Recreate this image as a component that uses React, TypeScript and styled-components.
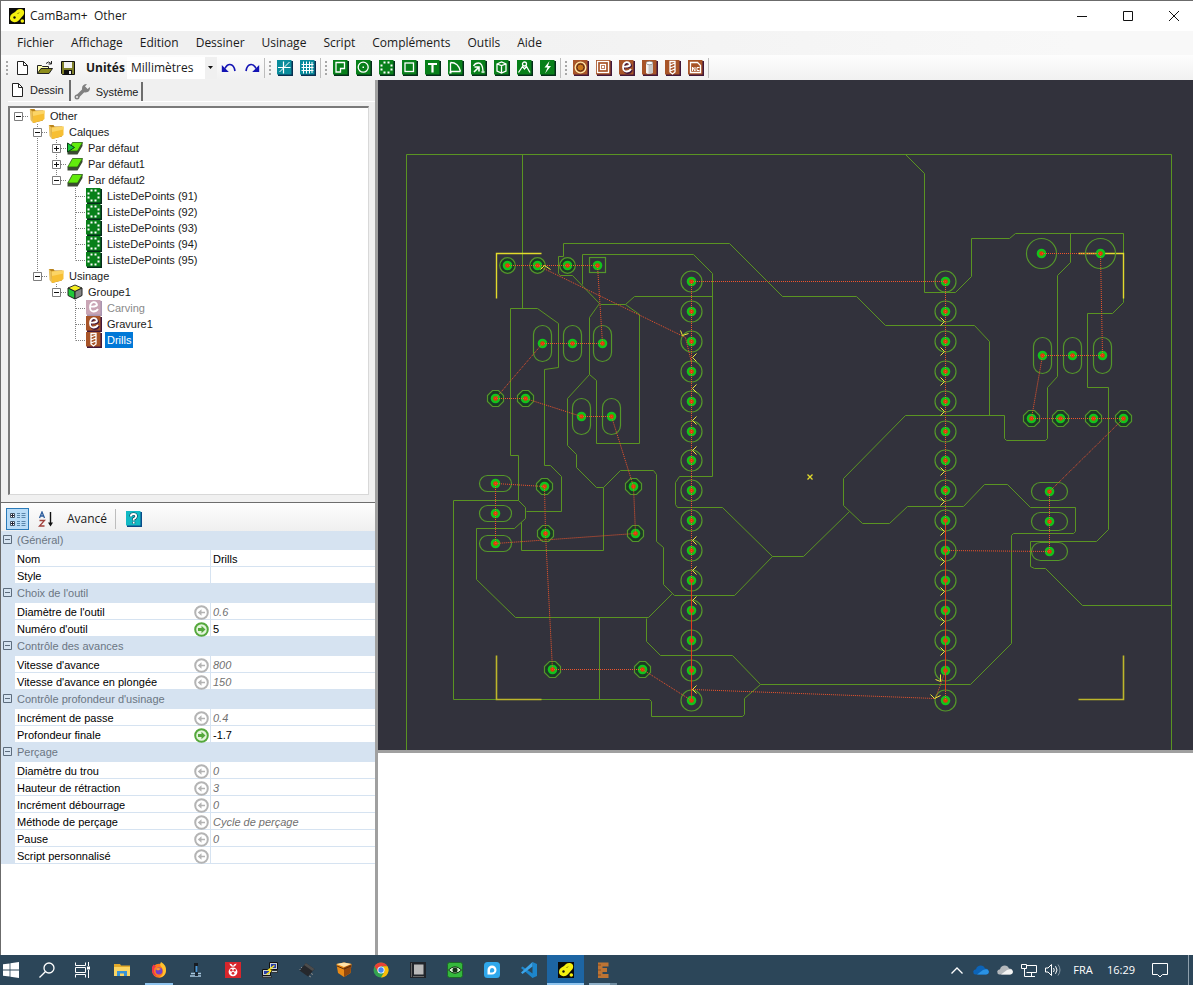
import React from 'react';
import styled, { createGlobalStyle, css } from 'styled-components';

const GlobalStyle = createGlobalStyle`
  * { box-sizing: border-box; }
  html, body { margin: 0; padding: 0; }
  body { background: #f0f0f0; }
  button { font: inherit; color: inherit; border: 0; padding: 0; margin: 0; background: none; cursor: default; }
  svg { display: block; flex: none; }
`;

const uiFont = `'Open Sans', 'Noto Sans', sans-serif`;
const gridFont = `'Liberation Sans', Arial, sans-serif`;

/* ---------- window frame ---------- */

const Desktop = styled.div`
  height: 100vh;
  min-height: 900px;
  display: flex;
  flex-direction: column;
  font: 12px/16px ${uiFont};
  color: #1a1a1a;
`;

const AppWindow = styled.div`
  flex: 1;
  min-height: 0;
  display: flex;
  flex-direction: column;
  border-left: 1px solid #6b6b6b;
  border-top: 1px solid #6b6b6b;
  background: #f0f0f0;
`;

const TitleBar = styled.header`
  display: flex;
  align-items: center;
  height: 30px;
  padding-left: 8px;
  background: #fff;
`;

const Title = styled.h1`
  flex: 1;
  margin: 0 0 0 5px;
  font: inherit;
  white-space: pre;
`;

const CaptionButton = styled.button<{ $edge?: boolean }>`
  display: flex;
  align-items: center;
  justify-content: center;
  width: ${p => (p.$edge ? 42 : 46)}px;
  padding-left: ${p => (p.$edge ? 4 : 0)}px;
  height: 30px;
`;

const MenuBar = styled.nav`
  display: flex;
  align-items: center;
  gap: 1px;
  height: 24px;
  padding-left: 8px;
  background: linear-gradient(90deg, #f0f0f0 30%, #f8f8f8 90%);
`;

const MenuItem = styled.button`
  padding: 0 8px;
  height: 20px;
`;

const ToolBar = styled.div`
  display: flex;
  align-items: center;
  height: 25px;
  padding-left: 4px;
  background: linear-gradient(180deg, #fdfdfd, #f1f1f1);
`;

const ToolButton = styled.button`
  display: flex;
  align-items: center;
  justify-content: center;
  width: 23px;
  height: 22px;
`;

const Grip = styled.span`
  width: 5px;
  height: 15px;
  background: radial-gradient(circle, #a8a8a8 1px, transparent 1px) 0 0 / 4px 4px repeat-y;
`;

const Divider = styled.span<{ $gap?: number }>`
  width: 1px;
  height: 20px;
  margin: 0 3px 0 ${p => p.$gap ?? 1}px;
  background: #bdbdbd;
`;

const UnitsLabel = styled.label`
  width: 41px;
  margin-left: 7px;
  font-weight: 700;
`;

const UnitsBox = styled.div`
  display: grid;
  width: 90px;
  height: 22px;
  align-items: center;
  background: linear-gradient(90deg, #fff 78px, #f0f0f0 78px);
  > * { grid-area: 1 / 1; }
  > svg { justify-self: end; margin-right: 4px; pointer-events: none; }
`;

const UnitsSelect = styled.select`
  appearance: none;
  width: 100%;
  height: 20px;
  padding: 0 0 0 4px;
  border: 0;
  background: transparent;
  font: inherit;
  color: inherit;
`;

const Workspace = styled.main`
  flex: 1;
  min-height: 0;
  display: grid;
  grid-template-columns: 377px minmax(0, 1fr);
`;

const SidePane = styled.aside`
  display: grid;
  grid-template-rows: minmax(0, 423fr) minmax(0, 452fr);
  min-height: 0;
  border-right: 3px solid #a0a0a0;
  font: 11px/16px ${gridFont};
`;

const TreePane = styled.section`
  display: flex;
  flex-direction: column;
  padding: 0 6px 7px 7px;
  border-bottom: 1px solid #6d6d6d;
  background: #f0f0f0;
`;

const Tabs = styled.div`
  display: flex;
  align-items: flex-end;
  height: 22px;
  margin: 0 -6px 4px 0;
  border-bottom: 1px solid #fff;
`;

const Tab = styled.button<{ $active?: boolean }>`
  display: flex;
  align-items: center;
  gap: 5px;
  height: ${p => (p.$active ? 21 : 19)}px;
  padding: ${p => (p.$active ? '0 5px 2px 1px' : '0 3px 0 3px')};
  border-right: 2px solid #6d6d6d;
`;

const TreeBox = styled.ul`
  flex: 1;
  min-height: 0;
  margin: 0;
  padding: 0;
  list-style: none;
  overflow: hidden;
  background: #fff;
  border: 1px solid #d8d8d8;
  border-left: 2px solid #7a7a7a;
  border-top: 2px solid #7a7a7a;
`;

const TreeRow = styled.li`
  display: flex;
  align-items: center;
  height: 16px;
`;

const NodeLabel = styled.span<{ $selected?: boolean; $dim?: boolean }>`
  margin-left: 3px;
  padding: 0 2px;
  ${p => p.$dim && css`color: #8a8a8a;`}
  ${p => p.$selected && css`background: #0078d7; color: #fff;`}
`;

/* ---------- property grid ---------- */

const PropertyPane = styled.section`
  display: flex;
  flex-direction: column;
  background: #fff;
  min-height: 0;
`;

const PropertyTools = styled.div`
  display: flex;
  align-items: center;
  height: 28px;
  padding: 3px 0 0 5px;
  background: linear-gradient(180deg, #fdfdfd, #efefef);
  font: 12px/16px ${uiFont};
`;

const SortButton = styled.button<{ $on?: boolean }>`
  display: flex;
  align-items: center;
  justify-content: center;
  width: 23px;
  height: 22px;
  margin-right: 5px;
  ${p => p.$on && css`border: 1px solid #2b7bb9; background: #b9dcf7;`}
`;

const AdvancedButton = styled.button`
  height: 22px;
  padding: 0 5px;
`;

const HelpButton = styled(SortButton)`
  margin-left: 3px;
`;

const PropertyTable = styled.table`
  width: 100%;
  table-layout: fixed;
  border-collapse: separate;
  border-spacing: 0;
  text-align: left;
  td, th { padding: 0; font-weight: 400; white-space: nowrap; }
`;

const Gutter = styled.td`
  background: #d6e3f1;
`;

const GroupHead = styled.th`
  height: 19px;
  background: #d6e3f1;
  color: #6b7683;
`;

const Expander = styled.button`
  display: flex;
  align-items: center;
  gap: 5px;
  height: 18px;
  padding: 0 0 2px 2px;
`;

const NameCell = styled.th`
  height: 17px;
  border-bottom: 1px solid #d6e3f1;
  border-right: 1px solid #d6e3f1;
  color: #000;
`;

const NameInner = styled.div`
  display: flex;
  align-items: center;
  justify-content: space-between;
  height: 16px;
  padding: 2px 1px 0 2px;
`;

const ValueCell = styled.td<{ $auto: boolean }>`
  border-bottom: 1px solid #d6e3f1;
  color: ${p => (p.$auto ? '#707070' : '#000')};
  font-style: ${p => (p.$auto ? 'italic' : 'normal')};
  div { height: 16px; padding: 1px 0 0 2px; }
`;

/* ---------- right side ---------- */

const ViewPane = styled.section`
  display: grid;
  grid-template-rows: minmax(0, 673fr) minmax(0, 202fr);
  min-width: 0;
  min-height: 0;
`;

const Canvas = styled.div`
  min-height: 0;
  overflow: hidden;
  background: #32323c;
  border-bottom: 3px solid #a0a0a0;
`;

const LogPane = styled.div`
  background: #fff;
`;

/* ---------- taskbar ---------- */

const TaskBar = styled.footer`
  display: flex;
  align-items: stretch;
  height: 30px;
  background: #2c4659;
  color: #fff;
  font: 11px/16px ${uiFont};
`;

const TaskButton = styled.button<{ $state?: 'open' | 'active' | 'dim'; $w?: number }>`
  display: flex;
  align-items: center;
  justify-content: center;
  width: ${p => p.$w ?? 37}px;
  ${p => p.$state === 'active' && css`background: #1d65a3; box-shadow: inset 0 -2px #8fc4ee;`}
  ${p => p.$state === 'open' && css`background: linear-gradient(#8fc4ee, #8fc4ee) center bottom / 28px 2px no-repeat;`}
  ${p => p.$state === 'dim' && css`background: linear-gradient(90deg, #8fb0c8 21px, #6f8ca0 21px) center bottom / 28px 2px no-repeat;`}
`;

const TaskGroup = styled.div`
  display: flex;
  margin-left: 9px;
`;

const Tray = styled.div`
  display: flex;
  align-items: center;
  margin-left: auto;
`;

const TrayButton = styled.button<{ $w?: number }>`
  display: flex;
  align-items: center;
  justify-content: center;
  width: ${p => p.$w ?? 24}px;
  height: 30px;
`;

const ShowDesktop = styled.button`
  width: 5px;
  height: 30px;
  margin-left: 9px;
  border-left: 1px solid #8fa0ad;
`;

/* ---------- icons ---------- */

const Ico = ({ children, s = 16 }: { children: React.ReactNode; s?: number }) => (
  <svg width={s} height={s} viewBox="0 0 16 16" aria-hidden="true">{children}</svg>
);

const CamBamIcon = () => (
  <Ico>
    <rect width="16" height="16" fill="#0a0a08" />
    <path d="M1 10.500Q.8 7 3.500 5.500 6 4.500 8 2 9.500.8 12 1q3.300.6 3.200 4-.1 2-2.200 3.800-1.500 1.500-3 3.500Q7.500 14.800 4.500 14 1.300 13.300 1 10.500Z" fill="#f4f010" />
    <circle cx="13.300" cy="13" r="1.800" fill="#f4f010" />
    <circle cx="5.500" cy="9.500" r="1.200" fill="#111" />
    <path d="M10 4.500 8.500 6" stroke="#777000" />
  </Ico>
);

const NewIcon = () => <Ico><path d="M3.500 1.500h6l4 4v9h-10z" fill="#fff" stroke="#222" /><path d="M9.500 1.500v4h4" fill="none" stroke="#222" /></Ico>;
const OpenIcon = () => (
  <Ico><path d="M.5 13.500V5.500h4l1 1h6v2.500" fill="#ffffb0" stroke="#222" /><path d="M.5 13.500 4 8.500h11.500l-3.500 5z" fill="#8c8c1a" stroke="#222" /><path d="M9 3.500q2.500-3 5 0M14.500 1v3h-3" fill="none" stroke="#222" /></Ico>
);
const SaveIcon = () => (
  <Ico><path d="M1.500 1.500h13v13h-12l-1-1z" fill="#80802a" stroke="#111" /><rect x="4" y="2" width="8" height="6" fill="#f4f4f4" /><rect x="4" y="10" width="8" height="5" fill="#111" /><rect x="9" y="11" width="2" height="3" fill="#eee" /></Ico>
);
const UndoIcon = ({ flip }: { flip?: boolean }) => (
  <Ico><g transform={flip ? 'translate(16 0) scale(-1 1)' : undefined}><path d="M4 8.500Q6 4.300 9 4.500q4 .3 5 6.500" fill="none" stroke="#1414b4" strokeWidth="1.700" /><path d="M.8 5v7h7z" fill="#1414b4" /></g></Ico>
);

const Tile = ({ tone, children }: { tone: 'green' | 'teal' | 'brown' | 'faded'; children: React.ReactNode }) => {
  const [face, shade] = {
    green: ['#08801a', '#052c1a'],
    teal: ['#0a8c9c', '#0a2f50'],
    brown: ['#a85428', '#42183a'],
    faded: ['#c9a5b5', '#a995b0'],
  }[tone];
  return (
    <Ico>
      <rect x="1" y="1" width="15" height="15" fill={shade} />
      <rect x="0" y="0" width="14.500" height="14.500" fill={face} />
      <g fill="none" stroke="#fff" strokeWidth="1.300">{children}</g>
    </Ico>
  );
};

const PointsTile = () => (
  <Tile tone="green">
    <g fill="#fff" stroke="none">
      {[[5, 2], [9, 2], [2, 5], [12, 5], [2, 9], [12, 9], [5, 12], [9, 12], [7, 7]].slice(0, 8).map(([x, y]) => <rect key={`${x}-${y}`} x={x - 0.500} y={y - 0.500} width="2" height="2" />)}
    </g>
  </Tile>
);
const EngraveTile = ({ faded }: { faded?: boolean }) => (
  <Tile tone={faded ? 'faded' : 'brown'}>
    {!faded && <path d="M6.500 7.500q4.500.5 5.500-1.500Q11.500 3 8.500 3.200 5 4 5 8.500q.3 4.500 3.500 4.500 3 0 4.500-3" strokeWidth="2" stroke="#42183a" />}
    <path d="M4.500 6.500q5.500.5 6.500-1.500Q10.500 2 7.500 2.200 4 3 4 7.500q.3 4 3.500 4 3 0 4.500-2.500" strokeWidth="1.800" />
  </Tile>
);
const DrillTile = () => (
  <Tile tone="brown"><path d="M5 1.500h5V12l-2.500 2L5 12zM5 5l5-2M5 8l5-2M5 11l5-2" /></Tile>
);

const drawTools: [string, React.ReactNode][] = [
  ['Polyligne', <Tile tone="green"><path d="M3 2.500h8.500v6H7.500v3.500H3z" /></Tile>],
  ['Cercle', <Tile tone="green"><circle cx="7.200" cy="7.200" r="5" /><rect x="6.500" y="6.500" width="1.500" height="1.500" fill="#fff" stroke="none" /></Tile>],
  ['Liste de points', <PointsTile />],
  ['Rectangle', <Tile tone="green"><rect x="3" y="3" width="8.500" height="8.500" /></Tile>],
  ['Texte', <Tile tone="green"><path d="M3 4h9M7.500 4v8.500" strokeWidth="2.200" /></Tile>],
  ['Arc', <Tile tone="green"><path d="M2.500 2.500v9h10M2.500 2.500q8 0 10 9" /><path d="M1.500 12.500h2" strokeWidth="2" /></Tile>],
  ['Spline', <Tile tone="green"><path d="M2.500 6Q4 3 7.500 3q4 0 4.500 8" /><path d="m3 12 4.500-4.500M3.500 7h4.500v4.500M10.500 12h3" strokeWidth="1.600" /></Tile>],
  ['Surface', <Tile tone="green"><path d="m3 4 4.500-2 4.500 2v7l-4.500 2L3 11zM3 4l4.500 1.500L12 4M7.500 5.500V13" /></Tile>],
  ['Image', <Tile tone="green"><path d="m1.500 12.500 4-6 2 2.500 2-2.500 3.500 6" /><circle cx="7.500" cy="4" r="2" /></Tile>],
  ['Script', <Tile tone="green"><path d="M9.500 1 4.500 7.500h3L5 13.500l6-7.500H8z" fill="#fff" stroke="none" /></Tile>],
];

const camTools: [string, React.ReactNode][] = [
  ['Profil', <Tile tone="brown"><circle cx="7.500" cy="7.500" r="5.300" stroke="#ffe9a8" /><circle cx="7.500" cy="7.500" r="3.500" fill="#c9761c" stroke="#5a2c10" strokeWidth="1" /></Tile>],
  ['Poche', <Tile tone="brown"><rect x="1.500" y="1.500" width="11" height="11" /><rect x="4.500" y="4.500" width="5" height="5" stroke="#fff" /><rect x="6.500" y="6.500" width="1" height="1" stroke="#fff" /></Tile>],
  ['Gravure', <EngraveTile />],
  ['Profil 3D', <Tile tone="brown"><path d="M4 3v10q3.500 2 7 0V3z" fill="#c8c8c8" stroke="none" /><path d="M4 3v10q1 .6 2.500 1V3z" fill="#f4f4f4" stroke="none" /><ellipse cx="7.500" cy="3" rx="3.500" ry="1.700" fill="#fff" stroke="#777" strokeWidth=".6" /></Tile>],
  ['Perçage', <DrillTile />],
  ['NC', <Tile tone="brown"><path d="M2.500 12.500v-10h7l3 3v7z" /><path d="M4.500 11V7l2.500 4V7M11.500 7.500H9v3h2.500" strokeWidth="1" /></Tile>],
];

const AxisTile = () => <Tile tone="teal"><path d="M6.500 1.500v12M1 7.500h12.500" strokeWidth="1.200" /><path d="M12.500 2 2.500 12" strokeWidth="1" /></Tile>;
const GridTile = () => <Tile tone="teal"><path d="M3.500 1.500v12M6.500 1.500v12M9.500 1.500v12M12 2v11M1.500 4.500h12M1.500 7.500h12M1.500 10.500h12" strokeWidth="1" /></Tile>;

const FolderIcon = () => (
  <Ico><path d="M1 1h4.500l1 1.500H14v10L4 15z" fill="#b9831c" /><path d="M3.500 3.500 15.500 2.500v8.500Q15 12.500 4 15z" fill="#f7bf34" /><path d="M3.500 3.500 15.500 2.500v3L4 8z" fill="#fcd566" /><path d="m.8 1 2.700 2.500L4 15 1.500 12z" fill="#e9c05c" /></Ico>
);
const LayerIcon = ({ active }: { active?: boolean }) => (
  <Ico><path d="M.5 11v3.500h10L15.500 6V2.500z" fill="#3c4a34" /><path d="M5.500 2.500h10L10.500 11H.8z" fill="#62ec0c" stroke="#2a5a14" strokeWidth=".8" />{active && <path d="M.5 3 7.500 7.500.5 12z" fill="#18c838" stroke="#0b3a14" />}</Ico>
);
const GroupIcon = () => (
  <Ico><path d="m8 1 7 3-7 3.500L1 4z" fill="#f6ee20" stroke="#333" /><path d="M1 4 8 7.500v7.500l-7-3.500z" fill="#20c838" stroke="#222" /><path d="M15 4 8 7.500v7.500l7-3.500z" fill="#858585" stroke="#222" /></Ico>
);
const WrenchIcon = () => (
  <svg width="17" height="17" viewBox="0 0 17 17" aria-hidden="true"><path d="M3 14 11 6" stroke="#808080" strokeWidth="3.500" strokeLinecap="round" /><path d="M8 5.500Q8 1 13 1l-2 2.500 2.500 2.500L16 4q.5 5-4.500 5.500Q8 9.500 8 5.500Z" fill="#808080" /><circle cx="3" cy="14" r="2.500" fill="#808080" /><circle cx="3" cy="14" r="1" fill="#f0f0f0" /></svg>
);

const StateIcon = ({ on }: { on: boolean }) => {
  const c = on ? '#55a83c' : '#b4b4b4';
  return (
    <svg width="15" height="15" viewBox="0 0 15 15" aria-hidden="true">
      <circle cx="7.500" cy="7.500" r="6.300" fill={on ? '#e4f5dc' : '#fff'} stroke={c} strokeWidth="2" />
      <g transform={on ? 'translate(15 0) scale(-1 1)' : undefined}>
        <path d={on ? 'M3.500 7.500 7.500 3.800V6h3.500v3H7.500v2.200z' : 'M3.800 7.500 7.500 4.200v2.500h3.500v1.600H7.500v2.500z'} fill={c} />
      </g>
    </svg>
  );
};

const Minus = () => (
  <svg width="9" height="9" viewBox="0 0 9 9" aria-hidden="true"><path d="M.5.500h8v8h-8zM2 4.500h5" fill="none" stroke="#5d6c7d" /></svg>
);

/* ---------- tree ---------- */

type Guide = ' ' | '|' | '-' | 'T' | 'L';
interface Node { guides: Guide[]; box?: '+' | '-'; icon: React.ReactNode; label: string; dim?: boolean; selected?: boolean }

const GuideCell = ({ kind, box }: { kind: Guide; box?: '+' | '-' }) => (
  <svg width="19" height="16" viewBox="0 0 19 16" aria-hidden="true">
    <g stroke="#808080" strokeDasharray="1 1" fill="none">
      {(kind === '|' || kind === 'T') && <path d="M8.500 0V16" />}
      {kind === 'L' && <path d="M8.500 0V8.500" />}
      {kind !== '|' && kind !== ' ' && <path d="M9 8.500H19" />}
    </g>
    {box && <path d="M4.500 4.500h8v8h-8z" fill="#fff" stroke="#7d7d7d" />}
    {box && <path d={box === '+' ? 'M6 8.500h5M8.500 6v5' : 'M6 8.500h5'} stroke="#111" />}
  </svg>
);

const nodes: Node[] = [
  { guides: ['-'], box: '-', icon: <FolderIcon />, label: 'Other' },
  { guides: [' ', 'T'], box: '-', icon: <FolderIcon />, label: 'Calques' },
  { guides: [' ', '|', 'T'], box: '+', icon: <LayerIcon active />, label: 'Par défaut' },
  { guides: [' ', '|', 'T'], box: '+', icon: <LayerIcon />, label: 'Par défaut1' },
  { guides: [' ', '|', 'L'], box: '-', icon: <LayerIcon />, label: 'Par défaut2' },
  ...[91, 92, 93, 94, 95].map((n): Node => ({
    guides: [' ', '|', ' ', n === 95 ? 'L' : 'T'], icon: <PointsTile />, label: `ListeDePoints (${n})`,
  })),
  { guides: [' ', 'L'], box: '-', icon: <FolderIcon />, label: 'Usinage' },
  { guides: [' ', ' ', 'L'], box: '-', icon: <GroupIcon />, label: 'Groupe1' },
  { guides: [' ', ' ', ' ', 'T'], icon: <EngraveTile faded />, label: 'Carving', dim: true },
  { guides: [' ', ' ', ' ', 'T'], icon: <EngraveTile />, label: 'Gravure1' },
  { guides: [' ', ' ', ' ', 'L'], icon: <DrillTile />, label: 'Drills', selected: true },
];

/* ---------- property data ---------- */

type Prop = [name: string, value: string, state?: 'auto' | 'set'];
const groups: [string, Prop[]][] = [
  ['(Général)', [['Nom', 'Drills'], ['Style', '']]],
  ["Choix de l'outil", [["Diamètre de l'outil", '0.6', 'auto'], ["Numéro d'outil", '5', 'set']]],
  ['Contrôle des avances', [["Vitesse d'avance", '800', 'auto'], ["Vitesse d'avance en plongée", '150', 'auto']]],
  ["Contrôle profondeur d'usinage", [['Incrément de passe', '0.4', 'auto'], ['Profondeur finale', '-1.7', 'set']]],
  ['Perçage', [
    ['Diamètre du trou', '0', 'auto'], ['Hauteur de rétraction', '3', 'auto'], ['Incrément débourrage', '0', 'auto'],
    ['Méthode de perçage', 'Cycle de perçage', 'auto'], ['Pause', '0', 'auto'], ['Script personnalisé', '', 'auto'],
  ]],
];

/* ---------- circuit board drawing ---------- */

const traces = [
  'M406 750V154H1171V750', 'M522 154V308', 'M510 308H537L558 323V367L544 369V465H550L561 476V511H526',
  'M510 308V455H518V500L525 507V518L514 528H476V579L515 617H648L672 593',
  'M518 500H453V699H649L651 701V716H742L744 714V698L760 684H970L1011 643V535L1013 533H1073L1075 531V507H1030L1007 484H984L963 506H907L889 523H862L843 505V478L905 415H1004V438L1006 440H1045L1047 438V387L1057 376V275L1070 262V233',
  'M989 415V341L974 325H885L856 296H782L729 243H563V256H558V273L560 275H572L599 303L589 317V374L596 380V443H639V314L625 304H600',
  'M589 374L567 398V445L576 454V467L596 487H603L620 470H653L656 474V541L663 547V584L674 595H734L772 556L722 507H677L675 504V482L679 476H712V273L693 254H582V284',
  'M603 487V550H521V522', 'M625 304L634 296H712', 'M772 556H803L849 511', 'M646 618V641L660 655H732L760 684', 'M599 617V699',
  'M905 154L924 173V292H955L971 276V238H1009L1015 233H1123V302L1112 313H1087V387H1108V529L1096 541H1030V566L1034 568H1045L1082 605H1171',
];

const rows = Array.from({ length: 15 }, (_, i) => Math.round(281 + i * 29.9));
const octagons = [[495, 398], [525, 398], [544, 486], [633, 486], [545, 533], [635, 533], [552, 669], [642, 669], [1031, 418], [1060, 418], [1093, 418], [1123, 418]];
const smallRounds = [[507, 265], [537, 265], [567, 265]];
const largeRounds = [[1041, 253], [1100, 253]];
const slots: [number, number, number, number][] = [
  ...[542, 572, 602].map(x => [x, 343, 18, 36] as [number, number, number, number]),
  ...[581, 611].map(x => [x, 416, 18, 36] as [number, number, number, number]),
  ...[1042, 1072, 1102].map(x => [x, 355, 18, 36] as [number, number, number, number]),
  ...[483, 513, 543].map(y => [495, y, 32, 16] as [number, number, number, number]),
  ...[491, 521, 551].map(y => [1049, y, 36, 18] as [number, number, number, number]),
];
const holes: number[][] = [
  ...rows.flatMap(y => [[691, y], [945, y]]), ...octagons, ...smallRounds, ...largeRounds, [597, 265], ...slots.map(([x, y]) => [x, y]),
];
const moves = [
  'M507 265H597', 'M597 265L602 343', 'M602 343H542', 'M542 343L495 398', 'M495 398H525', 'M525 398L581 416', 'M581 416H611', 'M611 416L633 486L635 533L495 543', 'M495 543V483',
  'M495 483L544 486L545 533L552 669', 'M552 669H642', 'M642 669L691 700',
  'M537 265L685 337L691 362', 'M691 281V700', 'M691 281H945', 'M945 281V700', 'M691 689L935 698L945 670',
  'M945 550L1049 551', 'M1049 551V491', 'M1049 491L1123 418', 'M1123 418H1031', 'M1031 418L1042 355', 'M1042 355H1102', 'M1102 355L1100 253', 'M1100 253H1041',
];
const leftArrows = [357, 388, 420, 450, 540, 570, 600, 689];
const rightArrows = [321, 351, 381, 411, 471, 501, 531, 561, 591, 621, 651];

const Board = () => (
  <svg width="100%" height="100%" viewBox="378 80 815 670" preserveAspectRatio="xMinYMin meet" role="img" aria-label="Circuit imprimé">
    <g transform="translate(.5 .5)" fill="none">
      <g stroke="#5a9422">
        {traces.map(d => <path key={d} d={d} />)}
      </g>
      <g stroke="#e2da2c">
        <path d="M496 298V253H541M1078 253H1123V298" strokeWidth="1.400" />
        <path d="M496 655V699H541M1078 699H1123V655" stroke="#bdb62b" strokeWidth="1.600" />
        <path d="m807 474 5 5m0-5-5 5" strokeWidth="1.300" />
      </g>
      <g stroke="#54962a" strokeWidth="1.200">
        {rows.flatMap(y => [691, 945].map(x => <circle key={`${x}-${y}`} cx={x} cy={y} r="10.500" />))}
        {smallRounds.map(([x, y]) => <circle key={`${x}-${y}`} cx={x} cy={y} r="7.800" fill="#1c3a26" />)}
        {largeRounds.map(([x, y]) => <circle key={`${x}-${y}`} cx={x} cy={y} r="15" />)}
        {octagons.map(([x, y]) => <path key={`${x}-${y}`} fill="#1c3a26" d={`M${x - 3} ${y - 8}h6l5 5v6l-5 5h-6l-5-5v-6z`} />)}
        <rect x="589" y="257" width="16" height="15" />
        {slots.map(([x, y, w, h]) => <rect key={`${x}-${y}`} x={x - w / 2} y={y - h / 2} width={w} height={h} rx={Math.min(w, h) / 2} />)}
      </g>
      {holes.map(([x, y]) => (
        <g key={`${x}-${y}`}>
          <circle cx={x} cy={y} r="4.800" fill="#12c41c" />
          <circle cx={x} cy={y} r="2.300" fill="#e2380c" />
        </g>
      ))}
      <g stroke="#f0552c" strokeDasharray="1 1" strokeDashoffset=".5">
        {moves.map(d => <path key={d} d={d} />)}
      </g>
      <path d="M691 580V700M945 520V690" stroke="#e23c1c" />
      <g stroke="#ece43a">
        {leftArrows.map(y => <path key={y} d={`M696 ${y - 4}L692 ${y}L696 ${y + 4}`} />)}
        {rightArrows.map(y => <path key={y} d={`M940 ${y - 4}L944 ${y}L940 ${y + 4}`} />)}
        <path d="M540 269L544 265L550 269M680 330L682 335L688 333M930 694L934 698L940 695M935 679L940 681L940 674" />
      </g>
    </g>
  </svg>
);

/* ---------- taskbar icons ---------- */

const WindowsIcon = () => <Ico><path d="M0 2.300 6.600 1.400v6.200H0zM7.400 1.300 16 0v7.600H7.400zM0 8.400h6.600v6.200L0 13.700zM7.400 8.400H16V16l-8.600-1.300z" fill="#fff" /></Ico>;
const SearchIcon = () => <Ico><circle cx="10" cy="6" r="5" fill="none" stroke="#fff" strokeWidth="1.300" /><path d="M6.300 9.700.500 15.500" stroke="#fff" strokeWidth="1.300" /></Ico>;
const TaskViewIcon = () => <Ico><path d="M.5.500v3h10v-3M.5 15.500v-3h10v3M.5 5.500h10v5H.5zM13.500 0v4M13.500 8v8" fill="none" stroke="#fff" /><rect x="12" y="4.500" width="3" height="3" fill="#fff" /></Ico>;
const ExplorerIcon = () => <Ico><path d="M0 2h6l1 1.500h9V14H0z" fill="#e2a92a" /><path d="M0 5h16v9H0z" fill="#fbd563" /><path d="M3 14V9h10v5h-3v-2.500H6V14z" fill="#3a94d6" /></Ico>;
const FirefoxIcon = () => <Ico><circle cx="8" cy="8.700" r="7" fill="#ff7a1c" /><path d="M10 0q5.500 3 5 9-1 6-7 6.500 5-3 4-7.500Q11 5 9.500 4 8.500 2 10 0Z" fill="#ffc22e" /><path d="M1 5 2.500 2.500 5 4.500q-2 1-2 4 0 4 4 6Q0 14 1 5Z" fill="#f0354a" /><circle cx="8" cy="9" r="3.400" fill="#7540c8" /><path d="M4.500 7Q7 5 10 7L7 8.500z" fill="#ff9a2c" /></Ico>;
const MillIcon = () => <Ico><path d="M6 1h4v9H6z" fill="#181c22" /><path d="M7.500 4h2v6h-2z" fill="#4a98d8" /><path d="M3 11.500h10M2 14h11" stroke="#a9c8de" strokeWidth="1.500" /><path d="M7 10h3v4H7z" fill="#1b2836" /></Ico>;
const RaspberryIcon = () => <Ico><rect width="16" height="16" fill="#d8262c" /><path d="M4.500 1.500Q7 1.500 8 4q1-2.500 3.500-2.500Q11 4.500 8 4.800 5 4.500 4.500 1.500Z" fill="#fff" /><circle cx="8" cy="9.800" r="4.400" fill="#fff" /><g fill="#d8262c"><circle cx="6.300" cy="8.300" r="1.200" /><circle cx="9.700" cy="8.300" r="1.200" /><circle cx="8" cy="11.300" r="1.400" /></g></Ico>;
const PuttyIcon = () => <Ico><path d="M7.500.500h8v7h-8zM.5 7.500h8v6h-8z" fill="#c8d0d4" stroke="#111" /><path d="M9 2h5v4H9zM2 9h5v3H2z" fill="#263ca8" /><path d="m12.500 3.500-6 4.500 3 .5-5 4" fill="none" stroke="#ffe81c" strokeWidth="1.500" /><path d="M9.500 8.500h6v2h-6zM.5 14h9v1.500h-9z" stroke="#111" strokeWidth=".7" fill="#c8d0d4" /></Ico>;
const ChipIcon = () => <Ico><path d="m7 1 8.500 6L9 14.500.500 8.500z" fill="#26282c" /><path d="m7 1 8.500 6-2 2L5 3z" fill="#4c4c4c" /><path d="m2 6 1-1m-2.500 3 1-1M10 14l2 1m0-3.500 2 1" stroke="#888" /></Ico>;
const BoxIcon = () => <Ico><path d="M.5 2 8 .5 15.500 2l-1 9L8 15l-6-4z" fill="#e98a16" /><path d="M8 5.500 15.500 2l-1 9L8 15z" fill="#94480c" /><path d="M.5 2 8 5 15.500 2 8 .5z" fill="#ffe3a8" /><path d="m1 4 7 3 7-3" fill="none" stroke="#5a2c08" /></Ico>;
const ChromeIcon = () => <Ico><circle cx="8" cy="8" r="7.500" fill="#34a350" /><path d="M1.500 4.200A7.500 7.500 0 0 1 14.500 4.200H8L5 9.800z" fill="#e94235" /><path d="M14.500 4.200A7.500 7.500 0 0 1 8 15.500l3.500-6L10 4.200z" fill="#fbbc08" /><circle cx="8" cy="8" r="3.600" fill="#fff" /><circle cx="8" cy="8" r="2.700" fill="#4285f4" /></Ico>;
const PanelIcon = () => <Ico><rect width="16" height="16" fill="#20242a" /><rect x="4" y="2.500" width="9.500" height="10" fill="#b9b9b9" /><path d="M1.500 1v14M3 14.500h11" stroke="#666" /></Ico>;
const EyeIcon = () => <Ico><rect x=".5" y=".5" width="15" height="15" rx="2" fill="#34b83c" stroke="#1c6a28" /><path d="M1.500 8q6.500-6.500 13 0-6.500 6.500-13 0Z" fill="#d6f2d0" stroke="#123016" /><circle cx="8" cy="8" r="2.500" fill="#123016" /></Ico>;
const SpeechIcon = () => <Ico><rect width="16" height="16" rx="3.500" fill="#2fa8ec" /><path d="M3.500 12.500V8a4.500 4.500 0 1 1 4.500 4.500z" fill="#fff" /><path d="M6 10.500V8a2.200 2.200 0 1 1 2.300 2.500z" fill="#2fa8ec" /></Ico>;
const CodeIcon = () => <Ico><path d="M11.500 0 16 2v12l-4.500 2L0 6l1.500-1.500 10 7z" fill="#1d86cc" /><path d="M11.500 0v4.500L1.500 12 0 10.500z" fill="#3aa4ea" /></Ico>;
const EagleIcon = () => <Ico><path d="M3 .5h10.500v4H7.500V6H12v4H7.500v2h6v4H3z" fill="#bd7434" /><path d="M3 3h3M3 8h3M3 13h3" stroke="#8a4c1c" /></Ico>;

const tasks: [string, React.ReactNode, ('open' | 'active' | 'dim')?][] = [
  ['Explorateur', <ExplorerIcon />], ['Firefox', <FirefoxIcon />, 'open'], ['Fraiseuse', <MillIcon />],
  ['Raspberry', <RaspberryIcon />], ['PuTTY', <PuttyIcon />], ['Circuit', <ChipIcon />], ['Paquet', <BoxIcon />],
  ['Chrome', <ChromeIcon />], ['Panneau', <PanelIcon />], ['Moniteur', <EyeIcon />], ['Messages', <SpeechIcon />],
  ['Code', <CodeIcon />], ['CamBam', <CamBamIcon />, 'active'], ['Eagle', <EagleIcon />, 'dim'],
];

const Cloud = ({ a, b }: { a: string; b: string }) => (
  <Ico><path d="M2.500 12.500Q0 12 .2 9.500.5 7.500 3 7.200 4 3.500 7.800 3.500q3 0 4.200 3 3.500 0 3.800 3 0 3-3 3z" fill={a} /><path d="M4 12.500 10 8q5-2 5.800 1.500 0 3-3 3z" fill={b} /></Ico>
);

const App = () => (
  <Desktop>
    <GlobalStyle />
    <AppWindow>
      <TitleBar>
        <CamBamIcon />
        <Title>{'CamBam+  Other'}</Title>
        <CaptionButton aria-label="Réduire"><svg width="10" height="10"><path d="M0 5.500h10" stroke="#111" /></svg></CaptionButton>
        <CaptionButton aria-label="Agrandir"><svg width="10" height="10"><path d="M.5.500h9v9h-9z" fill="none" stroke="#111" /></svg></CaptionButton>
        <CaptionButton $edge aria-label="Fermer"><svg width="10" height="10"><path d="m0 0 10 10M10 0 0 10" stroke="#111" /></svg></CaptionButton>
      </TitleBar>
      <MenuBar>
        {['Fichier', 'Affichage', 'Edition', 'Dessiner', 'Usinage', 'Script', 'Compléments', 'Outils', 'Aide'].map(m => <MenuItem key={m}>{m}</MenuItem>)}
      </MenuBar>
      <ToolBar>
        <Grip />
        <ToolButton aria-label="Nouveau"><NewIcon /></ToolButton>
        <ToolButton aria-label="Ouvrir"><OpenIcon /></ToolButton>
        <ToolButton aria-label="Enregistrer"><SaveIcon /></ToolButton>
        <UnitsLabel htmlFor="units">Unités</UnitsLabel>
        <UnitsBox>
          <UnitsSelect id="units" defaultValue="mm"><option value="mm">Millimètres</option></UnitsSelect>
          <svg width="5" height="3"><path d="M0 0h5L2.500 3z" fill="#111" /></svg>
        </UnitsBox>
        <ToolButton aria-label="Annuler"><UndoIcon /></ToolButton>
        <ToolButton aria-label="Rétablir"><UndoIcon flip /></ToolButton>
        <Divider /><Grip />
        <ToolButton aria-label="Axes"><AxisTile /></ToolButton>
        <ToolButton aria-label="Grille"><GridTile /></ToolButton>
        <Divider /><Grip />
        {drawTools.map(([name, icon]) => <ToolButton key={name} aria-label={name}>{icon}</ToolButton>)}
        <Divider /><Grip />
        {camTools.map(([name, icon]) => <ToolButton key={name} aria-label={name}>{icon}</ToolButton>)}
        <Divider />
      </ToolBar>
      <Workspace>
        <SidePane>
          <TreePane>
            <Tabs>
              <Tab $active><NewIcon />Dessin</Tab>
              <Tab><WrenchIcon />Système</Tab>
            </Tabs>
            <TreeBox>
              {nodes.map(n => (
                <TreeRow key={n.label}>
                  {n.guides.map((g, i) => <GuideCell key={i} kind={g} box={i === n.guides.length - 1 ? n.box : undefined} />)}
                  {n.icon}
                  <NodeLabel $dim={n.dim} $selected={n.selected}>{n.label}</NodeLabel>
                </TreeRow>
              ))}
            </TreeBox>
          </TreePane>
          <PropertyPane>
            <PropertyTools>
              <SortButton $on aria-label="Par catégorie">
                <Ico><path d="M.5 2.500h4v4h-4zM.5 10.500h4v4h-4z" fill="#fff" stroke="#456" /><path d="M2.500 3v3M1 4.500h3M2.500 11v3M1 12.500h3" stroke="#223" /><path d="M7 2.500h3M7 4.500h3M7 6.500h3M7 10.500h3M7 12.500h3M7 14.500h3M11.500 2.500h4M11.500 4.500h4M11.500 6.500h4M11.500 10.500h4M11.500 12.500h4M11.500 14.500h4" stroke="#5a86aa" /></Ico>
              </SortButton>
              <SortButton aria-label="Alphabétique">
                <Ico><path d="m1.500 7 2.500-6 2.500 6M2.500 5h3" fill="none" stroke="#2c5c9c" strokeWidth="1.300" /><path d="M1.500 9.500h5l-5 5.500h5" fill="none" stroke="#a0403a" strokeWidth="1.300" /><path d="M12.500 1v12" stroke="#111" strokeWidth="1.400" /><path d="M10 11.500h5l-2.500 4z" fill="#111" /></Ico>
              </SortButton>
              <AdvancedButton>Avancé</AdvancedButton>
              <Divider $gap={3} />
              <HelpButton aria-label="Aide">
                <Ico><rect x="1" y="1" width="15" height="15" fill="#0a4a88" /><rect width="14.500" height="14.500" fill="#12b9c4" /><path d="M4.800 5.500q0-2.500 2.700-2.500t2.700 2.300Q10 7 7.700 8v1.500M7.700 10.800v1.800" fill="none" stroke="#073a50" strokeWidth="3" /><path d="M4.800 5.500q0-2.500 2.700-2.500t2.700 2.300Q10 7 7.700 8v1.500M7.700 10.800v1.800" fill="none" stroke="#fff" strokeWidth="1.800" /></Ico>
              </HelpButton>
            </PropertyTools>
            <PropertyTable>
              <colgroup><col width="14" /><col width="196" /><col /></colgroup>
              {groups.map(([title, props]) => (
                <tbody key={title}>
                  <tr><GroupHead colSpan={3} scope="rowgroup"><Expander><Minus />{title}</Expander></GroupHead></tr>
                  {props.map(([name, value, state]) => (
                    <tr key={name}>
                      <Gutter />
                      <NameCell scope="row"><NameInner>{name}{state && <StateIcon on={state === 'set'} />}</NameInner></NameCell>
                      <ValueCell $auto={state === 'auto'}><div>{value}</div></ValueCell>
                    </tr>
                  ))}
                </tbody>
              ))}
            </PropertyTable>
          </PropertyPane>
        </SidePane>
        <ViewPane>
          <Canvas><Board /></Canvas>
          <LogPane />
        </ViewPane>
      </Workspace>
    </AppWindow>
    <TaskBar>
      <TaskButton $w={22} aria-label="Démarrer"><WindowsIcon /></TaskButton>
      <TaskButton $w={50} aria-label="Rechercher"><SearchIcon /></TaskButton>
      <TaskButton $w={22} aria-label="Vue des tâches"><TaskViewIcon /></TaskButton>
      <TaskGroup>
        {tasks.map(([name, icon, state]) => <TaskButton key={name} $state={state} aria-label={name}>{icon}</TaskButton>)}
      </TaskGroup>
      <Tray>
        <TrayButton aria-label="Icônes cachées"><svg width="12" height="7"><path d="m.5 6.500 5.500-5.500 5.500 5.500" fill="none" stroke="#fff" strokeWidth="1.300" /></svg></TrayButton>
        <TrayButton aria-label="OneDrive"><Cloud a="#0c64b8" b="#2a92e4" /></TrayButton>
        <TrayButton aria-label="OneDrive personnel"><Cloud a="#b4b8bc" b="#f4f4f4" /></TrayButton>
        <TrayButton aria-label="Réseau"><Ico><path d="M5.500 3.500h10v7h-10M10.500 10.500v4M6 14.500h8M3.500 7v7.500h3" fill="none" stroke="#fff" /><path d="M.5 2.500h5v4h-5z" fill="#2c4659" stroke="#fff" /></Ico></TrayButton>
        <TrayButton aria-label="Volume"><Ico><path d="M.5 6h2.500l3.500-3.500v11L3 10H.5zM8.500 6q1.500 2 0 4M10.500 4.200q3 3.800 0 7.600" fill="none" stroke="#fff" /><path d="M13 2.500q4 5.500 0 11" fill="none" stroke="#8899a5" /></Ico></TrayButton>
        <TrayButton $w={36}>FRA</TrayButton>
        <TrayButton $w={40}>16:29</TrayButton>
        <TrayButton $w={38} aria-label="Notifications"><svg width="16" height="16" viewBox="0 0 16 16"><path d="M.5 1.500h15v11h-5l-2.500 2.500-2.500-2.500h-5z" fill="none" stroke="#fff" /></svg></TrayButton>
        <ShowDesktop aria-label="Afficher le bureau" />
      </Tray>
    </TaskBar>
  </Desktop>
);

export default App;
